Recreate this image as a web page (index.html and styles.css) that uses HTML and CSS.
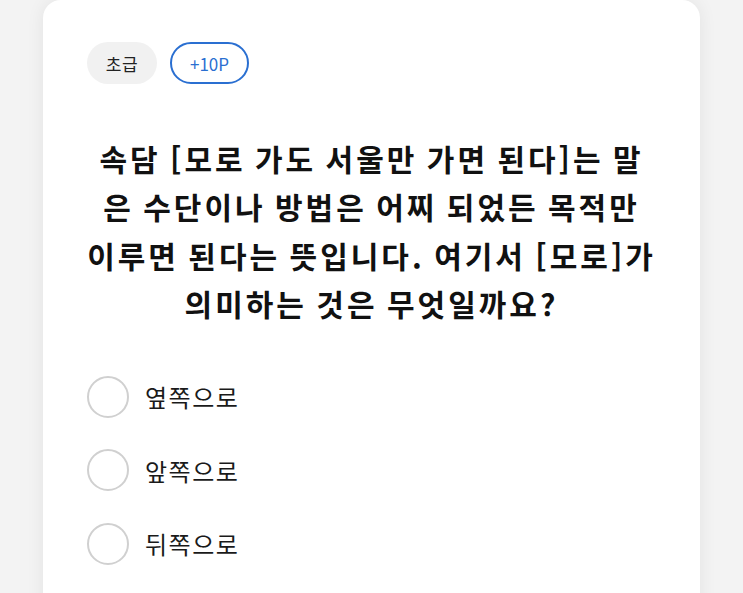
FILE: index.html
```html
<!DOCTYPE html>
<html lang="ko">

<head>
  <meta charset="UTF-8" />
  <meta name="viewport" content="width=device-width, initial-scale=1.0" />
  <title>오늘의 퀴즈</title>
  <link rel="stylesheet" href="styles.css">
</head>

<body>

  <main class="quiz-card">
    <div class="tags">
      <span class="tag level">초급</span>
      <span class="tag point">+10P</span>
    </div>

    <h2 class="question">속담 [모로 가도 서울만 가면 된다]는 말<br>은 수단이나 방법은 어찌 되었든 목적만<br>이루면 된다는 뜻입니다. 여기서 [모로]가<br>의미하는 것은 무엇일까요?</h2>

    <ul class="options">
      <li class="option"><span class="radio"></span><span class="label">옆쪽으로</span></li>
      <li class="option"><span class="radio"></span><span class="label">앞쪽으로</span></li>
      <li class="option"><span class="radio"></span><span class="label">뒤쪽으로</span></li>
    </ul>
  </main>

</body>

</html>
```

FILE: styles.css
```css
body {
  font-family: "Noto Sans CJK KR", "Noto Sans", sans-serif;
  margin: 0;
  padding: 0;
  background: #f3f3f3;
  color: #111;
  height: 593px;
  overflow: hidden;
}

.quiz-card {
  background: white;
  margin: 0 43px;
  padding: 42px 44px 40px;
  border-radius: 18px;
  box-shadow: 0 0 18px rgba(0, 0, 0, 0.07);
  min-height: 620px;
  box-sizing: border-box;
}

.tags {
  display: flex;
  gap: 13px;
}

.tag {
  display: inline-flex;
  align-items: center;
  justify-content: center;
  height: 42px;
  box-sizing: border-box;
  border-radius: 21px;
  font-size: 17px;
}

.tag.level {
  background: #f1f1f1;
  color: #222;
  width: 70px;
  letter-spacing: 0.5px;
}

.tag.point {
  border: 2px solid #2a6fd1;
  color: #2a6fd1;
  width: 79px;
}

.question {
  margin: 50px -10px 0;
  text-align: center;
  font-size: 30px;
  font-weight: 700;
  line-height: 48.4px;
  letter-spacing: 3px;
  word-spacing: -2px;
  white-space: nowrap;
  color: #111;
}

.options {
  list-style: none;
  margin: 48px 0 0;
  padding: 0;
  display: flex;
  flex-direction: column;
  gap: 31.5px;
}

.option {
  display: flex;
  align-items: center;
  gap: 16px;
  height: 42px;
}

.radio {
  width: 42px;
  height: 42px;
  box-sizing: border-box;
  border: 2px solid #d0d0d0;
  border-radius: 50%;
}

.label {
  font-size: 24px;
  letter-spacing: 1.5px;
  color: #1a1a1a;
}
```
